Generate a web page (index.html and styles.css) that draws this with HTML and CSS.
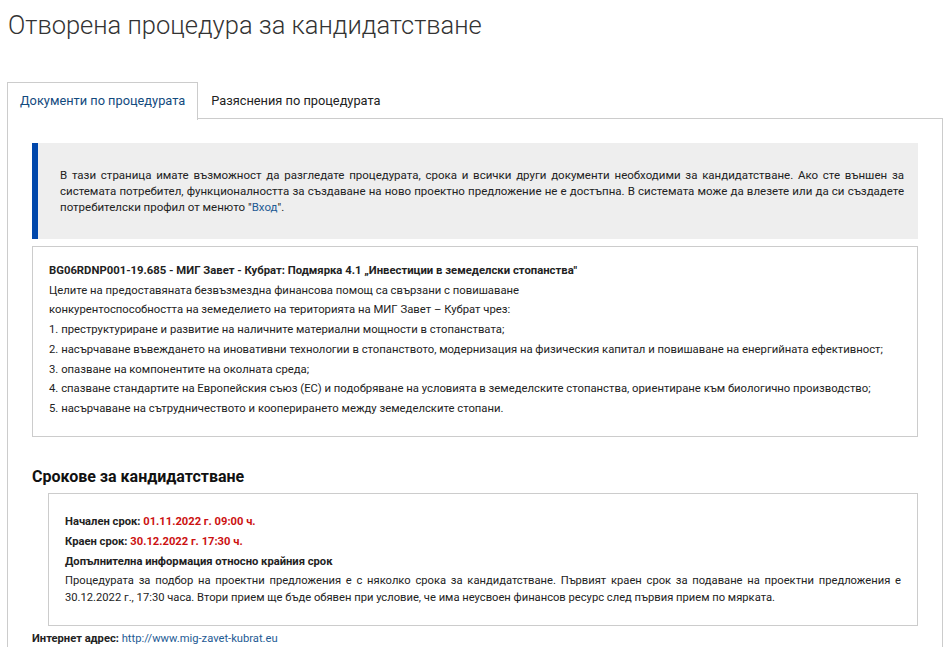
FILE: index.html
```html
<!DOCTYPE html>
<html lang="bg">
<head>
<meta charset="utf-8">
<title>Отворена процедура за кандидатстване</title>
<link rel="stylesheet" href="styles.css">
</head>
<body>
<h1 class="page-title">Отворена процедура за кандидатстване</h1>
<div class="tabs">
  <ul class="tab-list">
    <li class="tab active">Документи по процедурата</li>
    <li class="tab">Разяснения по процедурата</li>
  </ul>
  <div class="tab-panel">
    <div class="notice">
      <p>В тази страница имате възможност да разгледате процедурата, срока и всички други документи необходими за кандидатстване. Ако сте външен за системата потребител, функционалността за създаване на ново проектно предложение не е достъпна. В системата може да влезете или да си създадете потребителски профил от менюто <span class="nowrap">"<a href="#" class="link">Вход</a>".</span></p>
    </div>
    <div class="proc-box">
      <p class="strong">BG06RDNP001-19.685 - МИГ Завет - Кубрат: Подмярка 4.1 „Инвестиции в земеделски стопанства"</p>
      <p>Целите на предоставяната безвъзмездна финансова помощ са свързани с повишаване</p>
      <p>конкурентоспособността на земеделието на територията на МИГ Завет – Кубрат чрез:</p>
      <p>1. преструктуриране и развитие на наличните материални мощности в стопанствата;</p>
      <p>2. насърчаване въвеждането на иновативни технологии в стопанството, модернизация на физическия капитал и повишаване на енергийната ефективност;</p>
      <p>3. опазване на компонентите на околната среда;</p>
      <p>4. спазване стандартите на Европейския съюз (ЕС) и подобряване на условията в земеделските стопанства, ориентиране към биологично производство;</p>
      <p>5. насърчаване на сътрудничеството и кооперирането между земеделските стопани.</p>
    </div>
    <h2 class="section-title">Срокове за кандидатстване</h2>
    <div class="term-box">
      <p class="strong">Начален срок: <span class="red">01.11.2022 г. 09:00 ч.</span></p>
      <p class="strong">Краен срок: <span class="red">30.12.2022 г. 17:30 ч.</span></p>
      <p class="strong">Допълнителна информация относно крайния срок</p>
      <p class="just">Процедурата за подбор на проектни предложения е с няколко срока за кандидатстване. Първият краен срок за подаване на проектни предложения е 30.12.2022 г., 17:30 часа. Втори прием ще бъде обявен при условие, че има неусвоен финансов ресурс след първия прием по мярката.</p>
    </div>
    <p class="site"><span class="strong">Интернет адрес:</span> <a href="#" class="link">http://www.mig-zavet-kubrat.eu</a></p>
  </div>
</div>
</body>
</html>
```
FILE: styles.css
```css
html, body {
  margin: 0;
  padding: 0;
  background: #fff;
}
body {
  font-family: Roboto, "Liberation Sans", sans-serif;
  color: #222;
  padding: 0 8px 0 7px;
}
p { margin: 0; }
.nowrap { white-space: nowrap; }
.page-title {
  font-size: 25.5px;
  font-weight: 300;
  color: #333;
  margin: 0;
  padding: 10px 0 0 1px;
  line-height: 31px;
  height: 72px;
}
.tab-list {
  list-style: none;
  margin: 0;
  padding: 0;
  display: flex;
  height: 36px;
  border-bottom: 1px solid #ccc;
}
.tab {
  font-size: 12.8px;
  padding: 0 12px;
  line-height: 36px;
  color: #222;
  border: 1px solid transparent;
  border-bottom: none;
  margin-bottom: -1px;
  height: 36px;
}
.tab.active {
  color: #124a7e;
  border-color: #ccc;
  background: #fff;
  height: 37px;
}
.tab-panel {
  border: 1px solid #ccc;
  border-top: none;
  padding: 24px 24px 0 24px;
  min-height: 600px;
}
.notice {
  background: #eeeeee;
  border-left: 6px solid #0047ab;
  padding: 24px 14px 24px 22px;
  font-size: 11.5px;
  line-height: 16px;
  text-align: justify;
  color: #222;
}
.link {
  color: #1e5b94;
  text-decoration: none;
}
.proc-box {
  border: 1px solid #ccc;
  margin-top: 7px;
  padding: 14px 16px 17px 16px;
  font-size: 11.3px;
  line-height: 19.7px;
}
.strong { font-weight: 700; }
.section-title {
  font-size: 16px;
  font-weight: 700;
  color: #111;
  margin: 28px 0 0 0;
  line-height: 24px;
}
.term-box {
  border: 1px solid #ccc;
  margin: 4px 0 0 16px;
  padding: 18px 16px 19px 16px;
  font-size: 11.2px;
  line-height: 20px;
}
.term-box .just {
  text-align: justify;
  line-height: 17px;
}
.red { color: #cc1111; }
.site {
  font-size: 11.2px;
  margin-top: 5px;
  line-height: 16px;
}
```
